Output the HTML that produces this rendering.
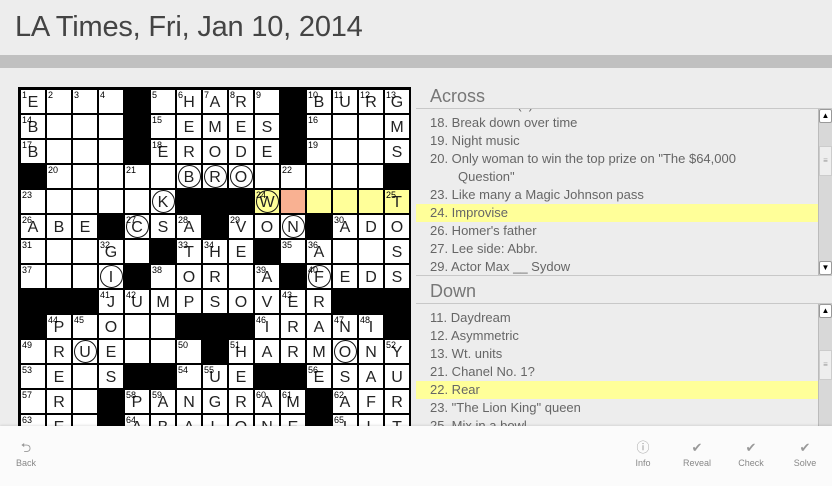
<!DOCTYPE html>
<html><head><meta charset="utf-8"><style>
*{margin:0;padding:0;box-sizing:border-box}
body{width:832px;height:486px;overflow:hidden;background:#ededed;font-family:"Liberation Sans","DejaVu Sans",sans-serif;position:relative}
.title{position:absolute;left:15px;top:11px;font-size:29px;color:#444;letter-spacing:-0.2px}
.bar{position:absolute;left:0;top:55px;width:832px;height:13px;background:#c0c0c0}
.grid{position:absolute;left:18px;top:87px;width:393px;height:360px;background:#000;padding:3px;display:grid;grid-template-columns:repeat(15,24px);grid-auto-rows:23px;column-gap:2px;row-gap:2px}
.grid b,.grid s{display:block;position:relative}
.grid b{background:#fff;font-weight:normal;font-size:16px;color:#222;text-align:center;line-height:25px}
.grid s{background:#000}
.grid u{position:absolute;left:1px;font-size:9px;text-decoration:none;color:#000;line-height:9px;top:1px;text-align:left}
.grid .c::after{content:"";position:absolute;left:1px;top:0;width:21px;height:21px;border:1.5px solid #111;border-radius:50%}
.grid .y{background:#ffff99}
.grid .o{background:#f9b192}
.hd{position:absolute;left:430px;font-size:18px;color:#777}
.list{position:absolute;left:416px;width:416px;overflow:hidden;border-top:1px solid #c8c8c8;border-bottom:1px solid #c8c8c8}
.list p{height:18px;line-height:18px;font-size:13px;color:#666;padding-left:14px;white-space:nowrap;width:402px}
.list .h{background:#ffff99}
.list .ind{padding-left:42px}
.sb{position:absolute;right:0;top:0;width:14px;bottom:0;background:#d8d8d8;border-left:1px solid #bbb}
.sb i{position:absolute;left:0;width:13px;background:#fff;border:1px solid #999;border-radius:2px;font-style:normal;font-size:8px;text-align:center;color:#000}
.sb .up{top:0;height:14px;line-height:12px}.sb .dn{bottom:0;height:14px;line-height:12px}
.sb .th{background:#eee;border:1px solid #ccc;height:30px;line-height:28px;color:#999;border-radius:0}
.bot{position:absolute;left:0;top:426px;width:832px;height:60px;background:#fbfbfb;box-shadow:0 -1px 2px rgba(0,0,0,0.1)}
.btn{position:absolute;top:12px;width:50px;text-align:center;font-size:9px;color:#888}
.btn .ic{height:20px;font-size:13px;color:#999;line-height:20px}
</style></head><body>
<div class="title">LA Times, Fri, Jan 10, 2014</div>
<div class="bar"></div>
<div class="grid">
<b><u>1</u>E</b><b><u>2</u></b><b><u>3</u></b><b><u>4</u></b><s></s><b><u>5</u></b><b><u>6</u>H</b><b><u>7</u>A</b><b><u>8</u>R</b><b><u>9</u></b><s></s><b><u>10</u>B</b><b><u>11</u>U</b><b><u>12</u>R</b><b><u>13</u>G</b>
<b><u>14</u>B</b><b></b><b></b><b></b><s></s><b><u>15</u></b><b>E</b><b>M</b><b>E</b><b>S</b><s></s><b><u>16</u></b><b></b><b></b><b>M</b>
<b><u>17</u>B</b><b></b><b></b><b></b><s></s><b><u>18</u>E</b><b>R</b><b>O</b><b>D</b><b>E</b><s></s><b><u>19</u></b><b></b><b></b><b>S</b>
<s></s><b><u>20</u></b><b></b><b></b><b><u>21</u></b><b></b><b class="c">B</b><b class="c">R</b><b class="c">O</b><b></b><b><u>22</u></b><b></b><b></b><b></b><s></s>
<b><u>23</u></b><b></b><b></b><b></b><b></b><b class="c">K</b><s></s><s></s><s></s><b class="c y"><u>24</u>W</b><b class="o"></b><b class="y"></b><b class="y"></b><b class="y"></b><b class="y"><u>25</u>T</b>
<b><u>26</u>A</b><b>B</b><b>E</b><s></s><b class="c"><u>27</u>C</b><b>S</b><b><u>28</u>A</b><s></s><b><u>29</u>V</b><b>O</b><b class="c">N</b><s></s><b><u>30</u>A</b><b>D</b><b>O</b>
<b><u>31</u></b><b></b><b></b><b><u>32</u>G</b><b></b><s></s><b><u>33</u>T</b><b><u>34</u>H</b><b>E</b><s></s><b><u>35</u></b><b><u>36</u>A</b><b></b><b></b><b>S</b>
<b><u>37</u></b><b></b><b></b><b class="c">I</b><s></s><b><u>38</u></b><b>O</b><b>R</b><b></b><b><u>39</u>A</b><s></s><b class="c"><u>40</u>F</b><b>E</b><b>D</b><b>S</b>
<s></s><s></s><s></s><b><u>41</u>J</b><b><u>42</u>U</b><b>M</b><b>P</b><b>S</b><b>O</b><b>V</b><b><u>43</u>E</b><b>R</b><s></s><s></s><s></s>
<s></s><b><u>44</u>P</b><b><u>45</u></b><b>O</b><b></b><b></b><s></s><s></s><s></s><b><u>46</u>I</b><b>R</b><b>A</b><b><u>47</u>N</b><b><u>48</u>I</b><s></s>
<b><u>49</u></b><b>R</b><b class="c">U</b><b>E</b><b></b><b></b><b><u>50</u></b><s></s><b><u>51</u>H</b><b>A</b><b>R</b><b>M</b><b class="c">O</b><b>N</b><b><u>52</u>Y</b>
<b><u>53</u></b><b>E</b><b></b><b>S</b><s></s><s></s><b><u>54</u></b><b><u>55</u>U</b><b>E</b><s></s><s></s><b><u>56</u>E</b><b>S</b><b>A</b><b>U</b>
<b><u>57</u></b><b>R</b><b></b><s></s><b><u>58</u>P</b><b><u>59</u>A</b><b>N</b><b>G</b><b>R</b><b><u>60</u>A</b><b><u>61</u>M</b><s></s><b><u>62</u>A</b><b>F</b><b>R</b>
<b><u>63</u></b><b>E</b><b></b><s></s><b><u>64</u>A</b><b>B</b><b>A</b><b>L</b><b>O</b><b>N</b><b>E</b><s></s><b><u>65</u>I</b><b>L</b><b>T</b>
</div>

<div class="hd" style="top:86px">Across</div>
<div class="list" style="top:108px;height:168px">
<p style="margin-top:-13px">17. Tolle Soleil (?)</p>
<p>18. Break down over time</p>
<p>19. Night music</p>
<p>20. Only woman to win the top prize on "The $64,000</p>
<p class="ind">Question"</p>
<p>23. Like many a Magic Johnson pass</p>
<p class="h">24. Improvise</p>
<p>26. Homer's father</p>
<p>27. Lee side: Abbr.</p>
<p>29. Actor Max __ Sydow</p>
<div class="sb"><i class="up">▲</i><i class="th" style="top:37px">≡</i><i class="dn">▼</i></div>
</div>

<div class="hd" style="top:281px">Down</div>
<div class="list" style="top:303px;height:124px;border-bottom:none">
<p style="margin-top:-13px">10. Line checked</p>
<p>11. Daydream</p>
<p>12. Asymmetric</p>
<p>13. Wt. units</p>
<p>21. Chanel No. 1?</p>
<p class="h">22. Rear</p>
<p>23. "The Lion King" queen</p>
<p>25. Mix in a bowl</p>
<div class="sb"><i class="up">▲</i><i class="th" style="top:46px">≡</i></div>
</div>

<div class="bot">
<div class="btn" style="left:1px"><div class="ic">⮌</div>Back</div>
<div class="btn" style="left:618px"><div class="ic">ⓘ</div>Info</div>
<div class="btn" style="left:672px"><div class="ic">✔</div>Reveal</div>
<div class="btn" style="left:726px"><div class="ic">✔</div>Check</div>
<div class="btn" style="left:780px"><div class="ic">✔</div>Solve</div>
</div>
</body></html>
